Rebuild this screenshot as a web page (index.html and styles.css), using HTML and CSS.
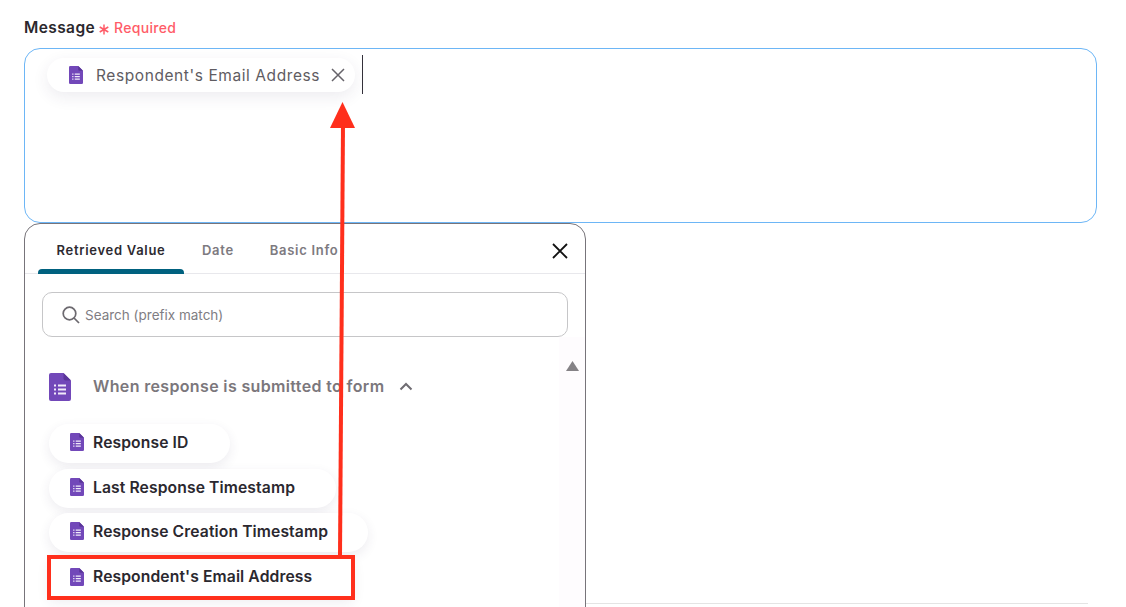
FILE: index.html
```html
<!DOCTYPE html>
<html lang="en">
<head>
<meta charset="utf-8">
<title>Message</title>
<link rel="stylesheet" href="styles.css">
</head>
<body>
<svg class="defs" width="0" height="0" aria-hidden="true">
  <symbol id="forms" viewBox="0 0 22 28">
    <path fill="#7248b9" d="M2 0h12.500L22 7.500V26a2 2 0 0 1-2 2H2a2 2 0 0 1-2-2V2a2 2 0 0 1 2-2z"/>
    <path fill="#5a3599" d="M14.500 0 22 7.500h-5.500a2 2 0 0 1-2-2z"/>
    <path fill="#f1ebfa" d="M5 11.500h2v2H5zM9 11.500h8v2H9zM5 15.500h2v2H5zM9 15.500h8v2H9zM5 19.500h2v2H5zM9 19.500h8v2H9z"/>
  </symbol>
</svg>
<main class="page">
  <div class="label-row">
    <span class="label">Message</span>
    <svg class="asterisk" viewBox="0 0 10 10"><path d="M5 0v10M.7 2.500l8.600 5M9.300 2.500l-8.600 5"/></svg>
    <span class="required">Required</span>
  </div>
  <div class="editor">
    <div class="chip">
      <svg class="icon-sm"><use href="#forms"/></svg>
      <span class="chip-text">Respondent's Email Address</span>
      <svg class="chip-x" viewBox="0 0 14 14"><path d="M1 1l12 12M13 1 1 13"/></svg>
    </div>
    <span class="caret"></span>
  </div>
  <div class="lower">
    <section class="panel">
      <div class="tabs">
        <span class="tab active">Retrieved Value</span>
        <span class="tab">Date</span>
        <span class="tab">Basic Info</span>
        <svg class="close" viewBox="0 0 16 16"><path d="M1 1l14 14M15 1 1 15"/></svg>
      </div>
      <div class="search">
        <svg class="search-icon" viewBox="0 0 18 18"><circle cx="7.500" cy="7.500" r="6.300"/><path d="M12 12l5 5"/></svg>
        <span class="placeholder">Search (prefix match)</span>
      </div>
      <div class="results">
        <span class="scroll-up"></span>
        <div class="group">
          <svg class="icon-lg"><use href="#forms"/></svg>
          <span class="group-title">When response is submitted to form</span>
          <svg class="chevron" viewBox="0 0 14 9"><path d="M1.500 7.500 7 2l5.500 5.500"/></svg>
        </div>
        <div class="items">
          <div class="item item-id"><svg class="icon-sm"><use href="#forms"/></svg>Response ID</div>
          <div class="item item-last"><svg class="icon-sm"><use href="#forms"/></svg>Last Response Timestamp</div>
          <div class="item item-creation"><svg class="icon-sm"><use href="#forms"/></svg>Response Creation Timestamp</div>
          <div class="item item-email"><svg class="icon-sm"><use href="#forms"/></svg>Respondent's Email Address</div>
        </div>
      </div>
    </section>
    <div class="rest"></div>
  </div>
  <svg class="annotation" viewBox="0 0 1126 607" aria-hidden="true">
    <rect class="anno-box" x="49" y="557" width="304" height="41"/>
    <path class="anno-line" d="M340 556 343 125"/>
    <path class="anno-head" d="M342.500 102 355 128H330z"/>
  </svg>
</main>
</body>
</html>
```
FILE: styles.css
```css
* { box-sizing: border-box; }
html, body { margin: 0; height: 607px; overflow: hidden; background: #fff; }
body { font-family: Inter, "Noto Sans", sans-serif; color: #27242a; }
.defs { position: absolute; }
.page { position: relative; height: 607px; padding: 0 29px 0 24px; overflow: hidden; }

.label-row { display: flex; align-items: center; height: 48px; padding-top: 6px; }
.label { font-size: 15.500px; font-weight: 600; letter-spacing: .4px; color: #2b282d; }
.asterisk { width: 10px; height: 11px; margin: 5px 0 0 4px; fill: none; stroke: #ff5c68; stroke-width: 1.500; }
.required { margin-left: 5px; font-size: 14px; font-weight: 500; letter-spacing: .3px; color: #ff5c68; }

.editor { display: flex; align-items: flex-start; height: 175px; border: 1px solid #6db6f6; border-radius: 16px; padding: 6px 0 0 22px; }
.chip { display: flex; align-items: center; height: 34px; margin-top: 3px; padding: 0 10px 0 22px; border-radius: 17px; background: #fff; box-shadow: 0 5px 16px rgba(60, 40, 90, .09); }
.chip-text { margin-left: 13px; font-size: 15.500px; letter-spacing: .58px; color: #5f5c62; white-space: nowrap; }
.chip-x { width: 14px; height: 14px; margin-left: 11px; fill: none; stroke: #66636a; stroke-width: 1.500; }
.caret { width: 1px; height: 39px; margin-left: 7px; background: #33303a; }

.lower { display: flex; align-items: flex-start; }
.panel { flex: none; width: 562px; height: 420px; border: 1px solid #77747a; border-radius: 16px 16px 0 0; }
.rest { flex: 1; height: 381px; border-bottom: 1px solid #e4e4e4; margin-right: 9px; }

.tabs { position: relative; display: flex; height: 50px; border-bottom: 1px solid #e8e8ec; padding-left: 13px; }
.tab { display: flex; justify-content: center; padding: 18px 18px 0; font-size: 13px; font-weight: 600; letter-spacing: .7px; color: #7d7a80; white-space: nowrap; }
.tab.active { position: relative; width: 146px; color: #2d2a30; }
.tab.active::after { content: ""; position: absolute; left: 0; right: 0; bottom: -1px; height: 5px; border-radius: 4px 4px 0 0; background: #00617f; }
.close { position: absolute; right: 17px; top: 19px; width: 16px; height: 16px; fill: none; stroke: #111; stroke-width: 1.800; }

.search { display: flex; align-items: center; height: 45px; margin: 18px 17px 0; padding-left: 19px; border: 1px solid #c6c6c8; border-radius: 10px; }
.search-icon { width: 18px; height: 18px; fill: none; stroke: #6c696f; stroke-width: 1.700; }
.placeholder { margin-left: 5px; font-size: 13.500px; color: #807d83; }

.results { position: relative; padding: 35px 0 0 24px; height: 285px; background: linear-gradient(to left, #fefcfe 26px, #fff 26px); }
.scroll-up { position: absolute; right: 6px; top: 24px; width: 13px; height: 10px; background: #858286; clip-path: polygon(50% 0, 100% 100%, 0 100%); }
.group { display: flex; align-items: center; height: 28px; }
.icon-lg { width: 22px; height: 28px; flex: none; margin-top: 2px; }
.group-title { margin-left: 22px; font-size: 16px; font-weight: 600; letter-spacing: .35px; color: #7b777c; white-space: nowrap; }
.chevron { width: 14px; height: 9px; margin-left: 15px; fill: none; stroke: #6f6c72; stroke-width: 2; }

.items { display: flex; flex-direction: column; align-items: flex-start; margin-top: 24px; }
.item { display: flex; align-items: center; height: 39px; margin-bottom: 6px; padding: 0 0 3px 21px; border-radius: 20px; background: #fff; box-shadow: 0 4px 12px rgba(60, 40, 90, .09); font-size: 15.700px; font-weight: 570; letter-spacing: .1px; color: #2b282f; white-space: nowrap; }
.item .icon-sm { margin-right: 9px; }
.item-id { width: 181px; }
.item-last { width: 287px; margin-bottom: 5px; }
.item-creation { width: 319px; }
.item-email { width: 304px; height: 40px; border-radius: 0; }
.icon-sm { width: 14px; height: 18px; flex: none; }

.annotation { position: absolute; left: 0; top: 0; width: 1126px; height: 607px; pointer-events: none; }
.anno-box { fill: none; stroke: #ff2f1c; stroke-width: 4; }
.anno-line { fill: none; stroke: #ff2f1c; stroke-width: 4; }
.anno-head { fill: #ff2f1c; }
```
